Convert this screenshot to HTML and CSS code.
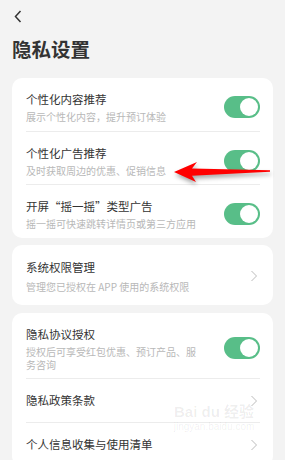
FILE: index.html
```html
<!DOCTYPE html>
<html lang="zh-CN">
<head>
<meta charset="UTF-8">
<meta name="viewport" content="width=device-width, initial-scale=1.0">
<title>隐私设置</title>
<link rel="stylesheet" href="styles.css">
</head>
<body>

<div class="page">
    <div class="topbar">
        <svg class="back" width="8" height="13" viewBox="0 0 8 13">
            <polyline points="6.5,1 1.5,6.5 6.5,12" fill="none" stroke="#333" stroke-width="1.5"/>
        </svg>
    </div>
    <h1 class="heading">隐私设置</h1>

    <div class="card">
        <div class="row">
            <div class="text">
                <div class="name">个性化内容推荐</div>
                <div class="desc">展示个性化内容，提升预订体验</div>
            </div>
            <span class="switch"></span>
        </div>
        <div class="row">
            <div class="text">
                <div class="name">个性化广告推荐</div>
                <div class="desc">及时获取周边的优惠、促销信息</div>
            </div>
            <span class="switch"></span>
        </div>
        <div class="row">
            <div class="text">
                <div class="name">开屏“摇一摇”类型广告</div>
                <div class="desc">摇一摇可快速跳转详情页或第三方应用</div>
            </div>
            <span class="switch"></span>
        </div>
    </div>

    <div class="card">
        <div class="row tall">
            <div class="text">
                <div class="name">系统权限管理</div>
                <div class="desc">管理您已授权在 APP 使用的系统权限</div>
            </div>
            <svg class="chevron" width="8" height="12" viewBox="0 0 8 12">
                <polyline points="1.5,1 6.5,6 1.5,11" fill="none" stroke="#bcbcbc" stroke-width="1"/>
            </svg>
        </div>
    </div>

    <div class="card">
        <div class="row">
            <div class="text narrow">
                <div class="name">隐私协议授权</div>
                <div class="desc">授权后可享受红包优惠、预订产品、服务咨询</div>
            </div>
            <span class="switch"></span>
        </div>
        <div class="row plain">
            <div class="name">隐私政策条款</div>
            <svg class="chevron" width="8" height="12" viewBox="0 0 8 12">
                <polyline points="1.5,1 6.5,6 1.5,11" fill="none" stroke="#bcbcbc" stroke-width="1"/>
            </svg>
        </div>
        <div class="row plain">
            <div class="name">个人信息收集与使用清单</div>
            <svg class="chevron" width="8" height="12" viewBox="0 0 8 12">
                <polyline points="1.5,1 6.5,6 1.5,11" fill="none" stroke="#bcbcbc" stroke-width="1"/>
            </svg>
        </div>
    </div>
</div>

<!-- annotation arrow drawn over the screenshot -->
<svg class="arrow" width="120" height="40" viewBox="160 150 120 40">
    <path d="M174 172 L197 162 L192 168.5 L270 170.3 L270 171.8 L192 175.8 L196 182 Z" fill="#ff0000"/>
</svg>

<div class="watermark">
    <div class="wm-logo">Bai du 经验</div>
    <div class="wm-url">jingyan.baidu.com</div>
</div>

</body>
</html>
```

FILE: styles.css
```css
body {
    margin: 0;
    position: relative;
    height: 460px;
    overflow: hidden;
    background-color: #f3f3f3;
    font-family: "Noto Sans CJK SC", "Noto Sans", sans-serif;
    color: #333;
}

.page {
    padding: 0 12px;
}

.topbar {
    height: 36px;
    box-sizing: border-box;
    padding: 10px 0 0 2px;
}

.back {
    display: block;
}

.heading {
    margin: 0 0 16px 0;
    font-size: 19.5px;
    line-height: 26px;
    font-weight: bold;
    color: #333;
}

.card {
    background-color: #fff;
    border-radius: 10px;
    padding: 0 13px 0 14px;
    margin-bottom: 7.5px;
}

.row {
    display: flex;
    align-items: center;
    justify-content: space-between;
    padding: 13px 0 7.5px 0;
    border-bottom: 1px solid #ececec;
}

.row:last-child {
    border-bottom: none;
}

.row.tall {
    padding: 13.5px 0 12.5px 0;
}

.row.tall .desc {
    margin-top: 4px;
}

.row.plain {
    padding: 13px 0;
}

.text.narrow {
    width: 172px;
}

.name {
    font-size: 11.5px;
    line-height: 17px;
    color: #333;
}

.desc {
    margin-top: 2px;
    font-size: 10px;
    line-height: 13px;
    color: #b8b8b8;
}

.switch {
    position: relative;
    flex: none;
    width: 36px;
    height: 22px;
    border-radius: 11px;
    background-color: #58be88;
}

.switch::after {
    content: "";
    position: absolute;
    right: 2px;
    top: 2px;
    width: 18px;
    height: 18px;
    border-radius: 50%;
    background-color: #fff;
}

.chevron {
    flex: none;
    margin-right: 2px;
}

.arrow {
    position: absolute;
    left: 160px;
    top: 150px;
    filter: drop-shadow(1px 3px 2px rgba(0, 0, 0, 0.35));
}

.watermark {
    position: absolute;
    left: 168px;
    top: 403px;
    width: 92px;
    text-align: center;
    color: rgba(0, 0, 0, 0.07);
    font-family: "Liberation Sans", "Noto Sans CJK SC", sans-serif;
}

.wm-logo {
    font-size: 15px;
    line-height: 18px;
    font-weight: bold;
}

.wm-url {
    font-size: 10px;
    line-height: 12px;
}
```
